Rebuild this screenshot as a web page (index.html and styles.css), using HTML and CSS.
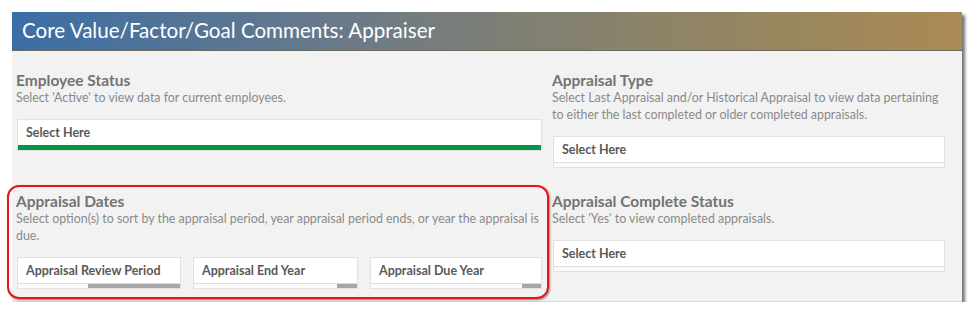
FILE: index.html
```html
<!doctype html>
<html>
<head>
  <meta charset="utf-8">
  <title>Core Value/Factor/Goal Comments: Appraiser</title>
  <link rel="stylesheet" href="styles.css">
</head>
<body>

  <div class="panel">
    <div class="panel-header">Core Value/Factor/Goal Comments: Appraiser</div>

    <div class="panel-body">

      <div class="filter">
        <div class="filter-title">Employee Status</div>
        <div class="filter-desc">Select 'Active' to view data for current employees.</div>
        <div class="select active">
          <div class="select-label">Select Here</div>
          <div class="select-bar"></div>
        </div>
      </div>

      <div class="filter">
        <div class="filter-title">Appraisal Type</div>
        <div class="filter-desc">Select Last Appraisal and/or Historical Appraisal to view data pertaining to either the last completed or older completed appraisals.</div>
        <div class="select">
          <div class="select-label">Select Here</div>
          <div class="select-bar"></div>
        </div>
      </div>

      <div class="filter highlighted">
        <div class="filter-title">Appraisal Dates</div>
        <div class="filter-desc">Select option(s) to sort by the appraisal period, year appraisal period ends, or year the appraisal is due.</div>
        <div class="select-row">
          <div class="select">
            <div class="select-label">Appraisal Review Period</div>
            <div class="select-bar"><div class="thumb" style="width: 57%"></div></div>
          </div>
          <div class="select">
            <div class="select-label">Appraisal End Year</div>
            <div class="select-bar"><div class="thumb" style="width: 12%"></div></div>
          </div>
          <div class="select">
            <div class="select-label">Appraisal Due Year</div>
            <div class="select-bar"><div class="thumb" style="width: 11%"></div></div>
          </div>
        </div>
      </div>

      <div class="filter">
        <div class="filter-title">Appraisal Complete Status</div>
        <div class="filter-desc">Select 'Yes' to view completed appraisals.</div>
        <div class="select">
          <div class="select-label">Select Here</div>
          <div class="select-bar"></div>
        </div>
      </div>

    </div>
  </div>

</body>
</html>
```

FILE: styles.css
```css
html, body {
  margin: 0;
  background: #fff;
}

body {
  font-family: Lato, "Noto Sans", sans-serif;
}

.panel {
  width: 950px;
  margin: 12px 0 0 12px;
  background: #f2f2f2;
  border-bottom: 1px solid #d6d6d6;
  box-shadow: 3px 3px 3px rgba(0, 0, 0, 0.55);
}

.panel-header {
  height: 38px;
  line-height: 37px;
  padding-left: 10px;
  color: #fff;
  font-size: 20.6px;
  background: linear-gradient(to right, #3a6ea6, #6b7a88 35%, #7e7f74 52%, #958660 78%, #ab8a55);
  border-bottom: 1px solid #6b6a5e;
}

.panel-body {
  display: grid;
  grid-template-columns: 526px 393px;
  column-gap: 10px;
  row-gap: 24px;
  padding: 20px 17px 12px 4px;
}

.filter {
  position: relative;
}

.filter-title {
  font-size: 15.5px;
  font-weight: bold;
  line-height: 18px;
  color: #737373;
}

.filter-desc {
  font-size: 12.4px;
  line-height: 17px;
  color: #8a8a8a;
}

.select {
  margin: 13px 0 0 1px;
  background: #fff;
  border: 1px solid #e2e2e2;
}

.select-label {
  height: 25px;
  line-height: 25px;
  padding-left: 8px;
  font-size: 12.5px;
  font-weight: bold;
  color: #595959;
  white-space: nowrap;
}

.select-bar {
  display: flex;
  justify-content: flex-end;
  height: 4px;
  background: #fbfbfb;
  border-top: 1px solid #dedede;
}

.select.active .select-bar {
  background: #009845;
  border-top-color: #009845;
}

.thumb {
  background: #a6a6a6;
}

.select-row {
  display: grid;
  grid-template-columns: 164px 165px 1fr;
  column-gap: 12px;
  margin-left: 1px;
}

.select-row .select {
  margin-left: 0;
}

.highlighted::before {
  content: "";
  position: absolute;
  left: -9px;
  top: -7px;
  right: -7px;
  bottom: -10px;
  border: 2px solid #e8141b;
  border-radius: 12px;
  box-shadow: 1px 1px 2px rgba(0, 0, 0, 0.45);
  pointer-events: none;
}
```
